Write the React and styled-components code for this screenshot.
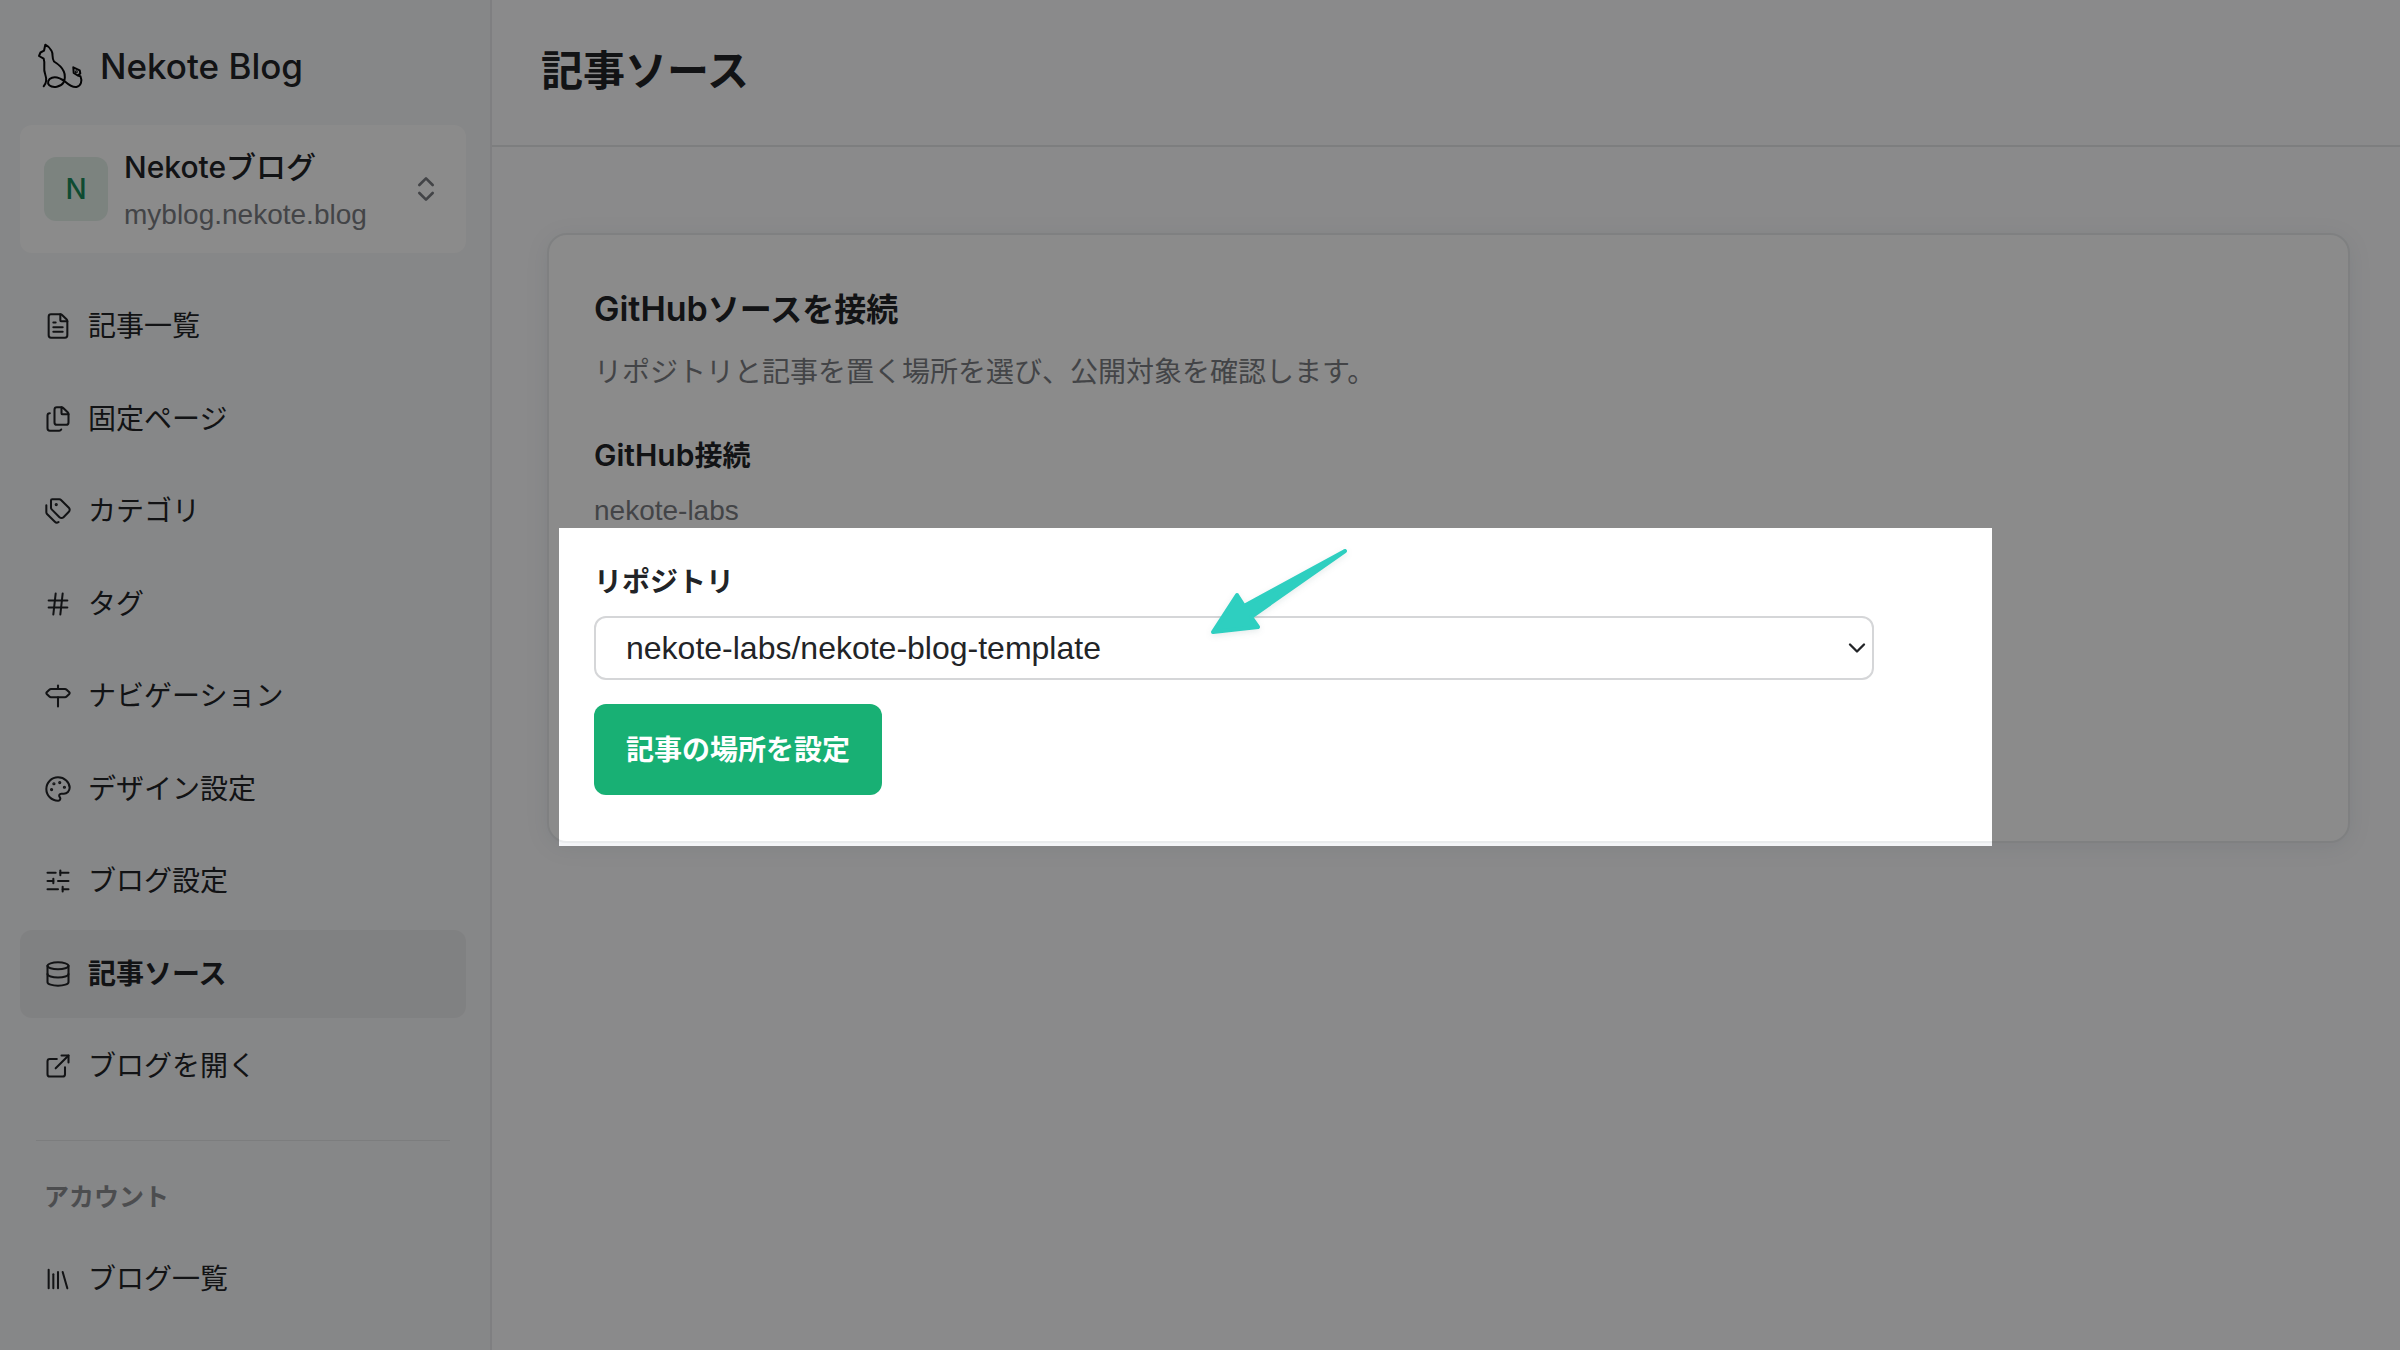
import styled, { createGlobalStyle } from 'styled-components';
import {
  ChevronDown,
  ChevronsUpDown,
  Database,
  ExternalLink,
  Files,
  FileText,
  Hash,
  Library,
  Palette,
  Signpost,
  SlidersHorizontal,
  Tags,
} from 'lucide-react';

const GlobalStyle = createGlobalStyle`
  * {
    box-sizing: border-box;
  }

  body {
    margin: 0;
    color: #222427;
    background: #fdfdff;
    font-family: 'Inter', 'Noto Sans CJK JP', sans-serif;
    font-size: 28px;
    line-height: 40px;
  }

  h1, h2, h3, p, ul {
    margin: 0;
    padding: 0;
  }
`;

const plainFont = "'Liberation Sans', 'Noto Sans CJK JP', sans-serif";

const Page = styled.div`
  display: flex;
  min-height: 100vh;
  overflow: hidden;
`;

const Sidebar = styled.aside`
  flex: 0 0 492px;
  height: 100vh;
  overflow: hidden;
  padding: 36px 24px 0 20px;
  background: #f6f7f9;
  border-right: 2px solid #e9eaed;
`;

const Brand = styled.a`
  display: flex;
  align-items: center;
  gap: 16px;
  height: 60px;
  padding-left: 16px;
  color: inherit;
  font-size: 35px;
  font-weight: 500;
  text-decoration: none;
`;

const BlogSwitcher = styled.button`
  display: flex;
  align-items: center;
  gap: 16px;
  width: 100%;
  height: 128px;
  margin: 29px 0 29px;
  padding: 0 24px;
  border: 0;
  border-radius: 12px;
  background: #ffffff;
  color: #7b7e83;
  font-family: ${plainFont};
  font-size: 28px;
  text-align: left;
`;

const Avatar = styled.span`
  flex: none;
  width: 64px;
  border-radius: 12px;
  background: #e4f0ea;
  color: #1b8a5c;
  font-family: 'Inter', sans-serif;
  font-size: 28px;
  font-weight: 500;
  line-height: 64px;
  text-align: center;
`;

const BlogInfo = styled.span`
  flex: 1;
  display: flex;
  flex-direction: column;
  gap: 12px;
  padding-bottom: 4px;
`;

const BlogName = styled.span`
  color: #222427;
  font-family: 'Inter', 'Noto Sans CJK JP', sans-serif;
  font-size: 30px;
  font-weight: 500;
`;

// Latin letters sit a little larger than the kana next to them
const Latin = styled.span`
  font-size: ${(props) => (props.$large ? '34px' : '30px')};
`;

const NavList = styled.ul`
  display: flex;
  flex-direction: column;
  justify-content: space-between;
  min-height: ${(props) => (props.$main ? '828px' : '88px')};
  list-style: none;
`;

const NavLink = styled.a`
  display: flex;
  align-items: center;
  gap: 16px;
  height: 88px;
  padding: 0 24px;
  border-radius: 12px;
  background: ${(props) => (props.$active ? '#ebecee' : 'transparent')};
  color: inherit;
  font-weight: ${(props) => (props.$active ? 700 : 400)};
  text-decoration: none;
`;

const Divider = styled.hr`
  margin: 30px 16px 36px;
  border: 0;
  border-top: 1px solid #e4e5e8;
`;

const NavHeading = styled.h3`
  margin-bottom: 18px;
  padding-left: 24px;
  color: #8c8e92;
  font-size: 25px;
  font-weight: 700;
`;

const Main = styled.main`
  flex: 1;
  min-width: 0;
`;

const Header = styled.header`
  display: flex;
  align-items: center;
  height: 147px;
  padding: 0 49px 4px;
  border-bottom: 2px solid #e6e7ea;
`;

const Title = styled.h1`
  font-size: 42px;
  line-height: 60px;
`;

const Content = styled.div`
  padding: 86px 50px 56px 55px;
`;

const Card = styled.section`
  position: relative;
  padding: 50px 45px 46px;
  border: 2px solid #e9ebed;
  border-radius: 20px;
  background: #ffffff;
  box-shadow: 0 4px 24px rgba(30, 50, 80, 0.08);
`;

const CardTitle = styled.h2`
  font-size: 32px;
  font-weight: 600;
  line-height: 48px;
`;

const Muted = styled.p`
  color: #7b7e83;
  font-family: ${plainFont};
`;

const Lead = styled(Muted)`
  margin: 19px 0 42px;
`;

const Subheading = styled.h3`
  margin-bottom: 15px;
  font-size: 28px;
  font-weight: 600;
`;

const Field = styled.div`
  display: grid;
  gap: 14px;
  max-width: 1280px;
  margin: 31px 0 24px;
`;

const Label = styled.label`
  font-weight: 600;
`;

const SelectBox = styled.div`
  display: grid;
  align-items: center;

  > * {
    grid-area: 1 / 1;
  }

  svg {
    justify-self: end;
    margin-right: 3px;
    pointer-events: none;
  }
`;

const Select = styled.select`
  appearance: none;
  width: 100%;
  height: 64px;
  padding: 0 30px;
  border: 2px solid #d5d6d8;
  border-radius: 12px;
  background: #ffffff;
  color: inherit;
  font-family: ${plainFont};
  font-size: 32px;
`;

const PrimaryButton = styled.button`
  height: 91px;
  padding: 0 32px 4px;
  border: 0;
  border-radius: 12px;
  background: #18b074;
  color: #ffffff;
  font-family: inherit;
  font-size: 28px;
  font-weight: 700;
`;

// Dims everything outside the step that is being explained
const Spotlight = styled.div`
  position: absolute;
  top: 293px;
  right: 356px;
  bottom: -5px;
  left: 10px;
  box-shadow: 0 0 0 3000px rgba(0, 0, 0, 0.455);
  pointer-events: none;
`;

const Pointer = styled.svg`
  position: absolute;
  top: 309px;
  left: 658px;
  filter: drop-shadow(0 2px 3px rgba(0, 60, 60, 0.1));
  pointer-events: none;
`;

const mainLinks = [
  { label: '記事一覧', icon: FileText },
  { label: '固定ページ', icon: Files },
  { label: 'カテゴリ', icon: Tags },
  { label: 'タグ', icon: Hash },
  { label: 'ナビゲーション', icon: Signpost },
  { label: 'デザイン設定', icon: Palette },
  { label: 'ブログ設定', icon: SlidersHorizontal },
  { label: '記事ソース', icon: Database, active: true },
  { label: 'ブログを開く', icon: ExternalLink },
];

const accountLinks = [{ label: 'ブログ一覧', icon: Library }];

function CatLogo() {
  return (
    <svg width="48" height="48" viewBox="0 0 48 48" fill="none" stroke="#08090a" strokeWidth="2" strokeLinecap="round" strokeLinejoin="round">
      <path d="M7.7 44.3C11 41 10.5 36 9 31.5C7 27 9.5 22 7.7 16.7L3 14L4.5 10.5L8 8.7L9.3 2.7C12 4 14 6 15.5 8.7C17.5 12 15.5 16 18 19.5C22 22 26 25 27.7 29.3C29.5 33 29 38 27.5 40.5C25 45 17 46.5 13.3 43.3C11 41 12 37 16 35.7C21 34 25 36.5 29.3 39.7C33 43 37 45.5 40.5 45C45 44 46.5 39 44.5 34.3L41.7 33.5L37.7 31L37.3 25.3L43.7 28.3L44.3 31.5L41.7 33.5" />
      <circle cx="40.3" cy="29.7" r="0.5" />
    </svg>
  );
}

function Nav({ links, main }) {
  return (
    <NavList $main={main}>
      {links.map(({ label, icon: Icon, active }) => (
        <li key={label}>
          <NavLink href="#" $active={active}>
            <Icon size={28} strokeWidth={1.75} />
            {label}
          </NavLink>
        </li>
      ))}
    </NavList>
  );
}

export default function App() {
  return (
    <Page>
      <GlobalStyle />
      <Sidebar>
        <Brand href="#">
          <CatLogo />
          Nekote Blog
        </Brand>
        <BlogSwitcher type="button">
          <Avatar>N</Avatar>
          <BlogInfo>
            <BlogName>Nekoteブログ</BlogName>
            <span>myblog.nekote.blog</span>
          </BlogInfo>
          <ChevronsUpDown size={32} />
        </BlogSwitcher>
        <nav>
          <Nav links={mainLinks} main />
          <Divider />
          <NavHeading>アカウント</NavHeading>
          <Nav links={accountLinks} />
        </nav>
      </Sidebar>
      <Main>
        <Header>
          <Title>記事ソース</Title>
        </Header>
        <Content>
          <Card>
            <CardTitle><Latin $large>GitHub</Latin>ソースを接続</CardTitle>
            <Lead>リポジトリと記事を置く場所を選び、公開対象を確認します。</Lead>
            <Subheading><Latin>GitHub</Latin>接続</Subheading>
            <Muted>nekote-labs</Muted>
            <Field>
              <Label htmlFor="repository">リポジトリ</Label>
              <SelectBox>
                <Select id="repository" defaultValue="template">
                  <option value="template">nekote-labs/nekote-blog-template</option>
                </Select>
                <ChevronDown size={28} />
              </SelectBox>
            </Field>
            <PrimaryButton type="button">記事の場所を設定</PrimaryButton>
            <Spotlight />
            <Pointer width="148" height="96" viewBox="0 0 148 96">
              <path
                d="M6 88L30 51L37 62L138 7L44 73L51 83Z"
                fill="#2ecfc0"
                stroke="#2ecfc0"
                strokeWidth="4"
                strokeLinejoin="round"
              />
            </Pointer>
          </Card>
        </Content>
      </Main>
    </Page>
  );
}
